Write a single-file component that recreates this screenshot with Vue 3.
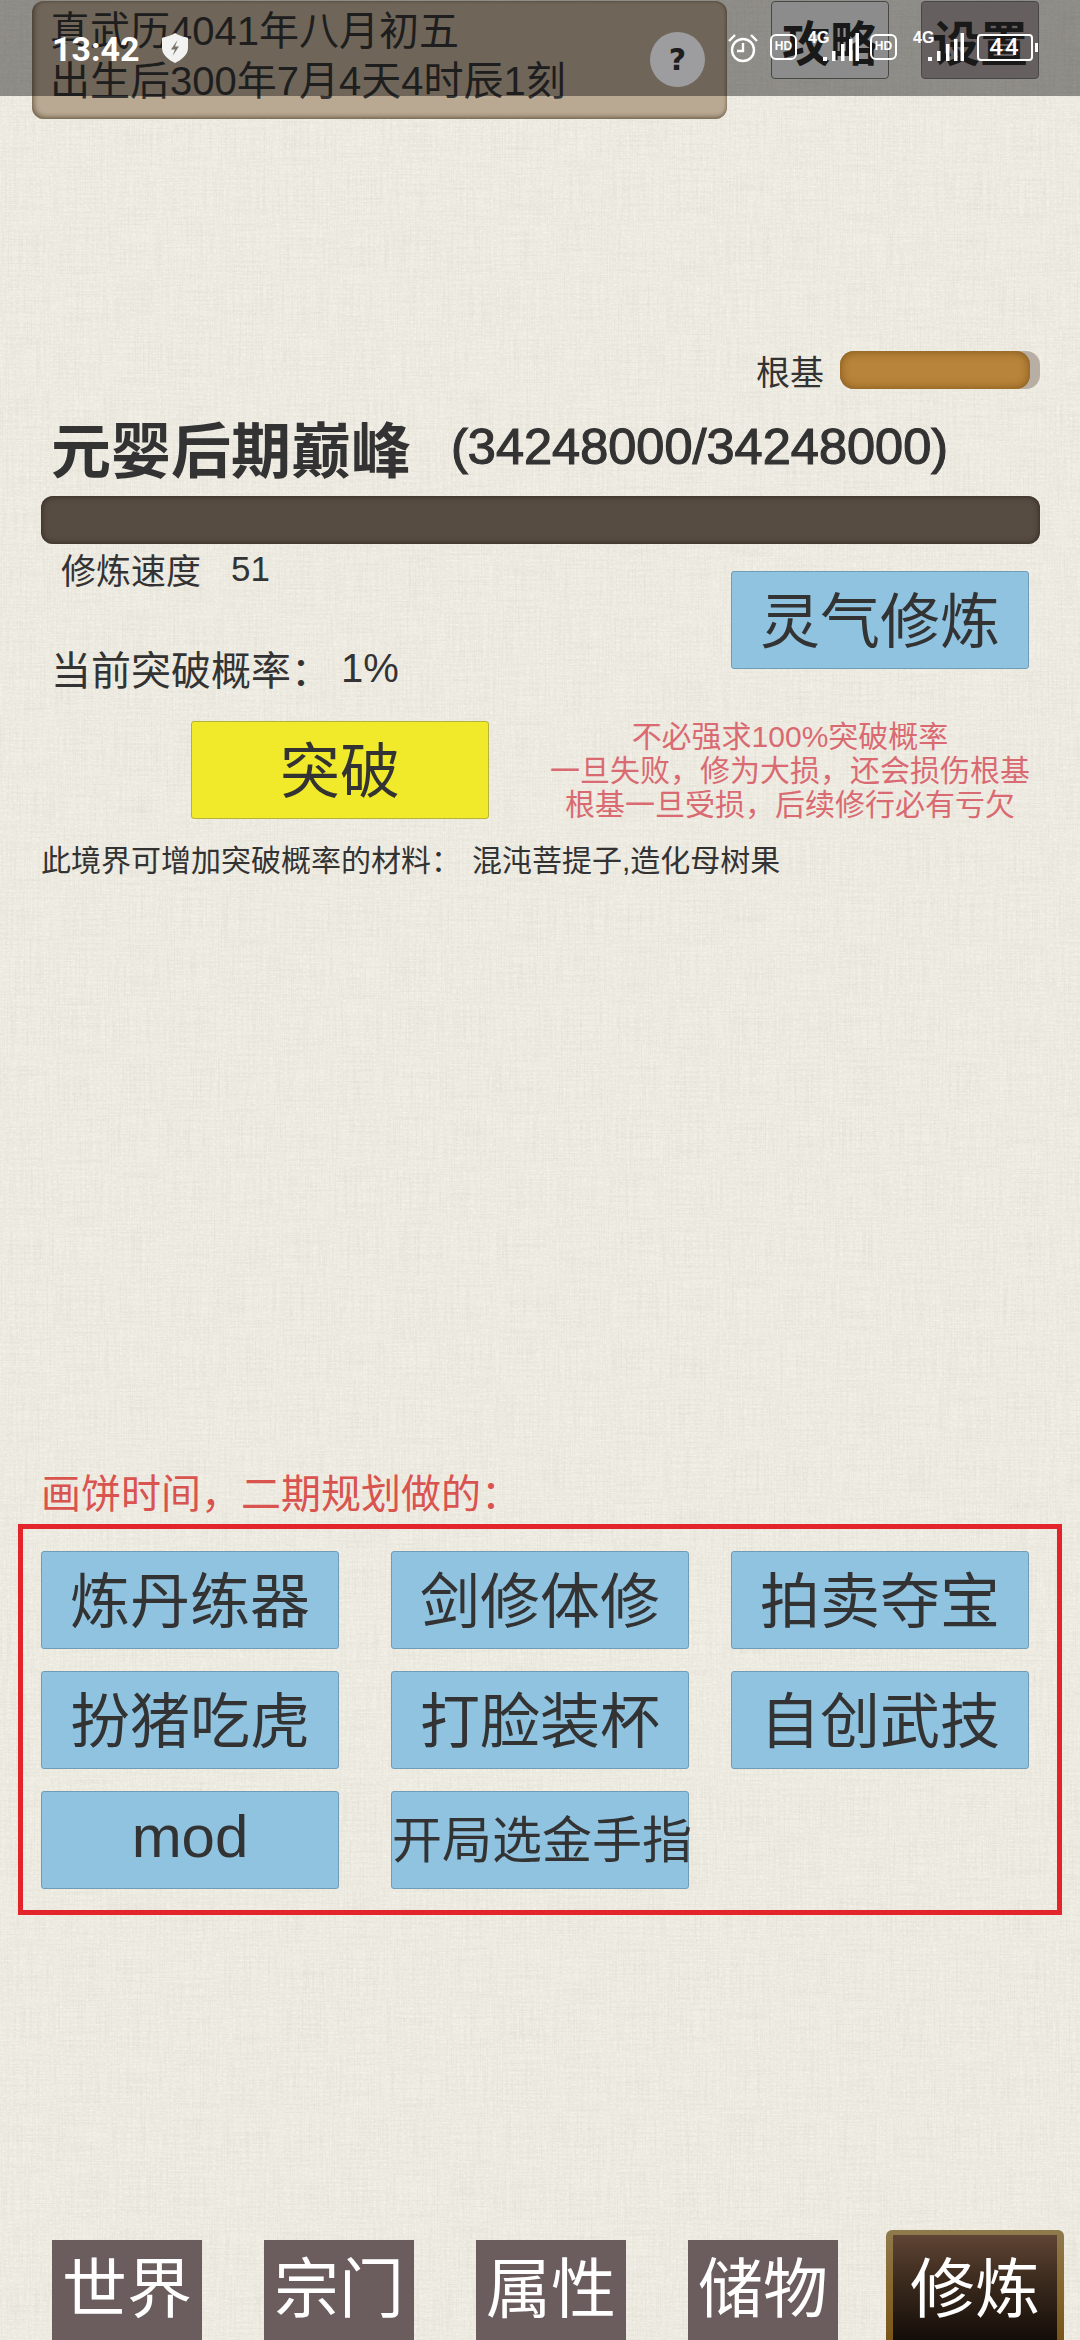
<template>
  <div class="page">
    <!-- linen texture -->
    <svg class="linen" width="1080" height="2340">
      <filter id="weave-v" x="0" y="0" width="100%" height="100%">
        <feTurbulence type="fractalNoise" baseFrequency="0.7 0.018" numOctaves="2" seed="4" />
        <feColorMatrix type="matrix" values="0 0 0 0 0.45  0 0 0 0 0.42  0 0 0 0 0.34  1.1 0 0 0 -0.42" />
      </filter>
      <filter id="weave-h" x="0" y="0" width="100%" height="100%">
        <feTurbulence type="fractalNoise" baseFrequency="0.018 0.7" numOctaves="2" seed="9" />
        <feColorMatrix type="matrix" values="0 0 0 0 0.45  0 0 0 0 0.42  0 0 0 0 0.34  1.2 0 0 0 -0.46" />
      </filter>
      <filter id="weave-l" x="0" y="0" width="100%" height="100%">
        <feTurbulence type="fractalNoise" baseFrequency="0.3 0.5" numOctaves="2" seed="15" />
        <feColorMatrix type="matrix" values="0 0 0 0 1  0 0 0 0 1  0 0 0 0 0.96  1.6 0 0 0 -0.72" />
      </filter>
      <rect width="1080" height="2340" filter="url(#weave-v)" opacity="0.24" />
      <rect width="1080" height="2340" filter="url(#weave-h)" opacity="0.2" />
      <rect width="1080" height="2340" filter="url(#weave-l)" opacity="0.6" />
    </svg>

    <header class="top">
      <div class="date-box">
        <div>真武历4041年八月初五</div>
        <div>出生后300年7月4天4时辰1刻</div>
      </div>
      <button class="top-btn guide">攻略</button>
      <button class="top-btn settings">设置</button>
    </header>

    <div class="root-row">
      <span class="root-label">根基</span>
      <div class="root-track"><div class="root-fill"></div></div>
    </div>

    <div class="title-row">
      <span class="realm">元婴后期巅峰</span>
      <span class="progress-num">(34248000/34248000)</span>
    </div>
    <div class="xp-bar"></div>

    <div class="train-row">
      <div class="train-left">
        <div class="speed"><span>修炼速度</span><span class="speed-num">51</span></div>
        <div class="chance"><span>当前突破概率：</span><span class="chance-num">1%</span></div>
      </div>
      <button class="btn">灵气修炼</button>
    </div>

    <div class="break-row">
      <button class="btn yellow">突破</button>
      <div class="tips">
        <div>不必强求100%突破概率</div>
        <div>一旦失败，修为大损，还会损伤根基</div>
        <div>根基一旦受损，后续修行必有亏欠</div>
      </div>
    </div>

    <div class="materials">
      <span>此境界可增加突破概率的材料：</span><span class="materials-list">混沌菩提子,造化母树果</span>
    </div>

    <div class="plan-label">画饼时间，二期规划做的：</div>
    <div class="plan-box">
      <button v-for="item in plans" :key="item" class="btn" :class="{ small: item.length > 4 }">{{ item }}</button>
    </div>

    <nav class="nav">
      <div v-for="tab in tabs" :key="tab" class="tab">{{ tab }}</div>
      <div class="tab active">修炼</div>
    </nav>

    <!-- system status bar on top of the game -->
    <div class="status">
      <span class="clock">13:42</span>
      <svg class="st bolt" width="26" height="30" viewBox="0 0 26 30">
        <path d="M13 0 C16 2 21 4 25 4.5 C26 4.6 26 5 26 6 V15 C26 22 19 27 13 30 C7 27 0 22 0 15 V6 C0 5 0 4.6 1 4.5 C5 4 10 2 13 0 Z" fill="#f2f2f0" />
        <path d="M15.5 7 L9 16.5 H13 L10.5 23 L17 13.5 H13 Z" fill="#77736a" />
      </svg>
      <svg class="st alarm" width="30" height="30" viewBox="0 0 30 30" fill="none" stroke="#fff" stroke-width="2.4">
        <circle cx="15" cy="17" r="11" />
        <path d="M15 10 V18 H9" />
        <path d="M1 8 L7 2 M29 8 L23 2" />
      </svg>
      <span class="hd hd1">HD</span>
      <span class="g4 g1">4G</span>
      <svg class="st sig1" width="36" height="28" viewBox="0 0 36 28" fill="#fff">
        <rect x="0" y="24" width="4" height="4" /><rect x="9" y="18" width="3.5" height="10" /><rect x="18" y="11" width="3.5" height="17" /><rect x="26" y="6" width="3.5" height="22" /><rect x="32.5" y="0" width="3.5" height="28" />
      </svg>
      <span class="hd hd2">HD</span>
      <span class="g4 g2">4G</span>
      <svg class="st sig2" width="36" height="28" viewBox="0 0 36 28" fill="#fff">
        <rect x="0" y="24" width="4" height="4" /><rect x="9" y="18" width="3.5" height="10" /><rect x="18" y="11" width="3.5" height="17" /><rect x="26" y="6" width="3.5" height="22" /><rect x="32.5" y="0" width="3.5" height="28" />
      </svg>
      <div class="battery"><span>44</span></div>
      <div class="battery-tip"></div>
    </div>
    <div class="help">?</div>
  </div>
</template>

<script setup>
const plans = ['炼丹练器', '剑修体修', '拍卖夺宝', '扮猪吃虎', '打脸装杯', '自创武技', 'mod', '开局选金手指']
const tabs = ['世界', '宗门', '属性', '储物']
</script>

<style>
html, body {
  margin: 0;
  background: #eeebe2;
}
</style>

<style scoped>
.page {
  position: relative;
  width: 1080px;
  height: 2340px;
  overflow: hidden;
  display: flex;
  flex-direction: column;
  background: #efece3;
  color: #333;
  font-family: "Liberation Sans", "Noto Sans CJK SC", sans-serif;
}

.linen {
  position: absolute;
  inset: 0;
}

.page > *:not(.linen) {
  z-index: 1;
}

.top {
  display: flex;
  align-items: flex-start;
  padding: 1px 0 0 32px;
}

.date-box {
  box-sizing: border-box;
  width: 695px;
  height: 118px;
  padding: 5px 0 0 18px;
  font-size: 40px;
  line-height: 50px;
  border-radius: 12px;
  background: #b9a993;
  box-shadow: inset 2px -2px 5px #75664f, inset -1px 0 3px #8b7a65;
}

.top-btn {
  box-sizing: border-box;
  width: 118px;
  height: 78px;
  padding: 0;
  font: bold 48px "Liberation Sans", "Noto Sans CJK SC", sans-serif;
  color: #2b2b2b;
  border-radius: 4px;
  border: 1px solid #777;
}

.guide {
  margin-left: 44px;
  background: #e9e9e9;
}

.settings {
  margin-left: 32px;
  background: #a99f9f;
}

.root-row {
  display: flex;
  justify-content: flex-end;
  align-items: center;
  gap: 16px;
  margin-top: 232px;
  padding-right: 40px;
  height: 38px;
}

.root-label {
  font-size: 34px;
}

.root-track {
  width: 200px;
  height: 38px;
  border-radius: 14px;
  background: #b9aea3;
}

.root-fill {
  width: 190px;
  height: 38px;
  border-radius: 14px;
  background: #b8833a;
  box-shadow: inset 0 0 10px #7a5417;
}

.title-row {
  display: flex;
  align-items: center;
  height: 70px;
  margin-top: 22px;
  padding-left: 51px;
}

.realm {
  font-size: 60px;
  font-weight: bold;
}

.progress-num {
  margin-left: 40px;
  font-size: 50.5px;
  -webkit-text-stroke: 1.2px #333;
}

.xp-bar {
  width: 999px;
  height: 48px;
  margin: 15px 0 0 41px;
  border-radius: 12px;
  background: #574c42;
  box-shadow: inset 0 0 6px #2c241d;
}

.train-row {
  display: flex;
  justify-content: space-between;
  align-items: flex-start;
  padding: 0 51px 0 51px;
  height: 151px;
}

.speed {
  display: flex;
  align-items: center;
  height: 50px;
  margin-top: -1px;
  padding-left: 10px;
  font-size: 35px;
}

.speed-num {
  margin-left: 30px;
  margin-top: 2px;
  font-size: 35px;
}

.chance {
  display: flex;
  align-items: center;
  height: 50px;
  margin-top: 50px;
  font-size: 40px;
}

.chance-num {
  margin-left: 10px;
}

.btn {
  box-sizing: border-box;
  width: 298px;
  height: 98px;
  padding: 0 0 8px;
  font: 60px "Liberation Sans", "Noto Sans CJK SC", sans-serif;
  color: #333;
  white-space: nowrap;
  background: #8fc3e0;
  border: 1px solid #6f9db6;
  border-radius: 3px;
}

.btn.small {
  font-size: 50px;
}

.train-row .btn {
  margin-top: 27px;
}

.yellow {
  background: #f0ea2a;
  border-color: #b7b33a;
}

.break-row {
  display: flex;
  align-items: flex-start;
  margin-top: 26px;
  padding-left: 191px;
}

.tips {
  width: 480px;
  margin: -1px 0 0 61px;
  font-size: 30px;
  line-height: 34px;
  text-align: center;
  white-space: nowrap;
  color: #da6a72;
}

.materials {
  display: flex;
  height: 40px;
  align-items: center;
  margin-top: 16px;
  padding-left: 41px;
  font-size: 30px;
}

.materials-list {
  margin-left: 11px;
}

.plan-label {
  height: 50px;
  margin-top: 591px;
  padding-left: 41px;
  font-size: 40px;
  line-height: 50px;
  color: #d9534f;
}

.plan-box {
  box-sizing: border-box;
  display: grid;
  grid-template-columns: 350px 340px 298px;
  grid-auto-rows: 98px;
  row-gap: 22px;
  width: 1044px;
  height: 391px;
  margin: 5px 0 0 18px;
  padding: 22px 0 0 18px;
  border: 5px solid #e3242b;
}

.nav {
  display: flex;
  align-items: flex-end;
  gap: 62px;
  margin-top: auto;
  padding-left: 52px;
}

.tab {
  width: 150px;
  height: 100px;
  text-align: center;
  font-size: 65px;
  line-height: 100px;
  color: #fff;
  background: #6b5d5d;
}

.tab.active {
  box-sizing: border-box;
  width: 178px;
  height: 110px;
  margin-left: -14px;
  line-height: 110px;
  border: solid transparent;
  border-width: 5px 7px 0;
  border-radius: 6px 6px 0 0;
  background: linear-gradient(#5f4434, #3a2a1d 45%, #140d08) padding-box,
    linear-gradient(#8f7a4e, #86682f 50%, #7a5518) border-box;
}

.status {
  position: absolute;
  top: 0;
  left: 0;
  width: 1080px;
  height: 96px;
  background: rgba(0, 0, 0, 0.4);
  color: #fff;
  z-index: 2;
}

.status > * {
  position: absolute;
}

.clock {
  left: 52px;
  top: 30px;
  font: bold 34px/38px Roboto, sans-serif;
}

.bolt {
  left: 162px;
  top: 33px;
}

.alarm {
  left: 728px;
  top: 33px;
}

.hd {
  box-sizing: border-box;
  top: 34px;
  width: 27px;
  height: 26px;
  border: 2.4px solid #fff;
  border-radius: 6px;
  font: bold 12px/21px "Liberation Sans", sans-serif;
  text-align: center;
}

.hd1 { left: 770px; }
.hd2 { left: 870px; }

.g4 {
  top: 29px;
  font: bold 16px/18px "Liberation Sans", sans-serif;
}

.g1 { left: 808px; }
.g2 { left: 913px; }

.sig1 {
  left: 823px;
  top: 33px;
}

.sig2 {
  left: 928px;
  top: 33px;
}

.battery {
  box-sizing: border-box;
  left: 977px;
  top: 34px;
  width: 56px;
  height: 27px;
  border: 2.4px solid #fff;
  border-radius: 4px;
  text-align: center;
  font: 500 24px/22px Roboto, sans-serif;
  letter-spacing: 2px;
}

.battery-tip {
  left: 1035px;
  top: 43px;
  width: 3px;
  height: 9px;
  background: #fff;
}

.help {
  position: absolute;
  left: 650px;
  top: 32px;
  width: 55px;
  height: 55px;
  border-radius: 50%;
  background: #9d9da0;
  color: #1e1e1e;
  font: bold 30px/55px "DejaVu Sans", sans-serif;
  text-align: center;
  z-index: 3;
}
</style>
